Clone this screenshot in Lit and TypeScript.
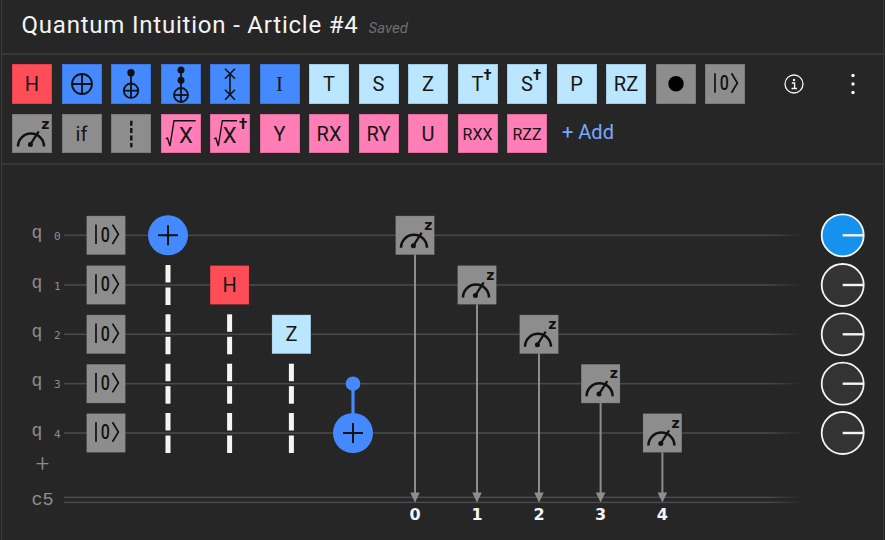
import { LitElement, html, css, svg } from "lit";
import { customElement } from "lit/decorators.js";

const WY = [235.3, 285, 334.3, 383.7, 433];
const MX = [415, 477, 539, 600.6, 662.4];

const meterGlyph = svg`
  <path d="M6 32.5 A13 13 0 0 1 32 32.5" fill="none" stroke="#111" stroke-width="2.5"/>
  <path d="M18.4 30.4 L26.7 17.4" stroke="#111" stroke-width="2.2"/>
  <circle cx="18.4" cy="30.4" r="2.5" fill="#111"/>
  <text x="33.3" y="14.6" class="mz">z</text>`;

const ketGlyph = svg`
  <path d="M10 9.3 V28.7" stroke="#111" stroke-width="1.7"/>
  <text transform="translate(19.3 26.4) scale(.8 1)" class="ket0">0</text>
  <path d="M26.5 9.3 L32.4 19 L26.5 28.7" fill="none" stroke="#111" stroke-width="1.7"/>`;

@customElement("app-root")
export class AppRoot extends LitElement {
  static styles = css`
    :host { display: block; width: 885px; height: 540px; background: #262626; box-sizing: border-box; padding: 0 1px;
      overflow: hidden; font-family: Roboto, "Open Sans", sans-serif; color: #f4f4f4; }
    .frame { height: 540px; box-sizing: border-box; border-left: 1px solid #383838; border-right: 1px solid #383838; }
    .head { height: 55px; box-sizing: border-box; display: flex; align-items: center; padding: 0 0 3px 19.5px; gap: 10px;
      border-bottom: 2px solid #363636; }
    .title { font-size: 24px; letter-spacing: .79px; }
    .saved { font-size: 15px; font-style: italic; color: #6f6f6f; margin-top: 5px; }
    .tools { height: 110px; box-sizing: border-box; border-bottom: 2px solid #363636; padding: 9px 10px 0; display: flex; flex-direction: column; gap: 10px; }
    .row { display: flex; gap: 9.5px; align-items: center; height: 40px; }
    .row.low { height: 39px; }
    .g { width: 40px; height: 100%; box-sizing: border-box; flex: none; display: flex; align-items: center; justify-content: center;
      color: #161616; font-size: 20px; box-shadow: inset 0 0 0 1px rgba(0,0,0,.12); position: relative; }
    .g svg { width: 40px; height: 40px; display: block; flex: none; }
    .small { font-size: 16px; padding-top: 2px; }
    .serif { font-family: "Liberation Serif", serif; font-size: 21px; }
    .red { background: #ff4d58; }
    .blue { background: #4589ff; }
    .sky { background: #bae6ff; }
    .pink { background: #ff7eb6; }
    .grey { background: #8d8d8d; }
    .dag { font-weight: 700; font-size: 15px; position: absolute; top: 2px; right: 6px; }
    .add { color: #78a9ff; font-size: 20px; margin: -3px 0 0 5.5px; }
    .spacer { width: 19.5px; flex: none; }
    .ico { width: 20px; height: 20px; flex: none; display: block; }
    .dots { margin-left: 29.5px; }
    .canvas { position: relative; height: 375px; }
    .canvas > svg { position: absolute; left: -2px; top: -165px; width: 885px; height: 540px; }
    text { font-family: Roboto, sans-serif; }
    .ql { font-family: "Liberation Mono", monospace; font-size: 18px; fill: #8d8d8d; }
    .qs { font-family: "DejaVu Sans Mono", monospace; font-size: 11px; fill: #8d8d8d; }
    .cl { font-family: "Liberation Mono", monospace; font-size: 18.5px; fill: #8d8d8d; }
    .gt { font-size: 20px; fill: #161616; text-anchor: middle; }
    .rad { font-size: 22px; fill: #161616; text-anchor: middle; }
    .rdag { font-size: 15px; font-weight: 700; fill: #111; text-anchor: middle; }
    .mz { font-family: "DejaVu Sans", sans-serif; font-weight: 700; font-size: 14px; fill: #111; text-anchor: middle; }
    .ket0 { font-weight: 500; font-size: 20px; fill: #111; text-anchor: middle; }
    .num { font-family: "DejaVu Sans", sans-serif; font-weight: 700; font-size: 16px; fill: #f4f4f4; text-anchor: middle; }
    .plus { font-size: 24px; font-weight: 300; fill: #8d8d8d; text-anchor: middle; }
  `;

  private box(x: number, y: number, fill: string, inner: unknown) {
    return svg`<g transform="translate(${x} ${y})">
      <rect x=".5" y=".5" width="39" height="39" fill=${fill} stroke="rgba(0,0,0,.14)"/>${inner}</g>`;
  }

  private barrier(x: number, from: number) {
    return WY.slice(from).map((y) => svg`
      <rect x=${x - 2.5} y=${y - 20} width="5" height="17.5" fill="#f4f4f4"/>
      <rect x=${x - 2.5} y=${y + 2.5} width="5" height="17.5" fill="#f4f4f4"/>`);
  }

  private circuit() {
    return svg`
      <defs>
        <linearGradient id="fade" x1="0" x2="1" y1="0" y2="0">
          <stop offset=".95" stop-color="#4a4a4a"/><stop offset="1" stop-color="#4a4a4a" stop-opacity="0"/>
        </linearGradient>
      </defs>
      ${WY.map((y, i) => svg`
        <text x="31.5" y=${y + 2.5} class="ql">q</text>
        <text x="54" y=${y + 4.7} class="qs">${i}</text>
        <rect x="64" y=${y - 0.75} width="740" height="1.5" fill="url(#fade)"/>`)}
      <text x="42.5" y="472.3" class="plus">+</text>
      <text x="31.5" y="505" class="cl">c5</text>
      <rect x="64" y="496.6" width="740" height="1.5" fill="url(#fade)"/>
      <rect x="64" y="501.6" width="740" height="1.5" fill="url(#fade)"/>
      ${WY.map((y) => this.box(86, y - 20, "#8d8d8d", ketGlyph))}

      <circle cx="168" cy=${WY[0]} r="20" fill="#4589ff"/>
      <path d=${`M158 ${WY[0]} H178 M168 ${WY[0] - 10} V${WY[0] + 10}`} stroke="#111" stroke-width="2"/>
      ${this.barrier(168, 1)}

      ${this.box(209.6, WY[1] - 20, "#ff4d58", svg`<text x="20" y="27" class="gt">H</text>`)}
      ${this.barrier(229.6, 2)}

      ${this.box(271.4, WY[2] - 20, "#bae6ff", svg`<text x="20" y="27" class="gt">Z</text>`)}
      ${this.barrier(291.4, 3)}

      <path d=${`M353 ${WY[3]} V${WY[4]}`} stroke="#4589ff" stroke-width="3.2"/>
      <circle cx="353" cy=${WY[3]} r="7.3" fill="#4589ff"/>
      <circle cx="353" cy=${WY[4]} r="20" fill="#4589ff"/>
      <path d=${`M343 ${WY[4]} H363 M353 ${WY[4] - 10} V${WY[4] + 10}`} stroke="#111" stroke-width="2"/>

      ${MX.map((x, i) => svg`
        <path d=${`M${x} ${WY[i]} V494`} stroke="#8d8d8d" stroke-width="2"/>
        <path d=${`M${x - 4.8} 492.6 H${x + 4.8} L${x} 502.6 Z`} fill="#8d8d8d"/>
        ${this.box(x - 20, WY[i] - 20, "#8d8d8d", meterGlyph)}
        <text x=${x} y="520" class="num">${i}</text>`)}

      ${WY.map((y, i) => svg`
        <circle cx="842.7" cy=${y} r="21" fill=${i === 0 ? "#1592ee" : "#333333"} stroke="#f4f4f4" stroke-width="1.8"/>
        <path d=${`M842.7 ${y} H863.7`} stroke="#f4f4f4" stroke-width="2.4"/>`)}
    `;
  }

  render() {
    const dag = html`<span class="dag">†</span>`;
    return html`
      <div class="frame">
      <div class="head"><span class="title">Quantum Intuition - Article #4</span><span class="saved">Saved</span></div>
      <div class="tools">
        <div class="row">
          <div class="g red">H</div>
          <div class="g blue"><svg viewBox="0 0 40 40"><circle cx="20" cy="20" r="10" fill="none" stroke="#111" stroke-width="1.8"/><path d="M10 20H30M20 10V30" stroke="#111" stroke-width="1.8"/></svg></div>
          <div class="g blue"><svg viewBox="0 0 40 40"><circle cx="20" cy="8.7" r="3.7" fill="#111"/><path d="M20 8.7V34" stroke="#111" stroke-width="1.8"/><circle cx="20" cy="26.7" r="7.2" fill="none" stroke="#111" stroke-width="1.8"/><path d="M12.8 26.7H27.2" stroke="#111" stroke-width="1.8"/></svg></div>
          <div class="g blue"><svg viewBox="0 0 40 40"><circle cx="20" cy="6" r="3.5" fill="#111"/><circle cx="20" cy="16.3" r="3.5" fill="#111"/><path d="M20 6V38" stroke="#111" stroke-width="1.8"/><circle cx="20" cy="31" r="7" fill="none" stroke="#111" stroke-width="1.8"/><path d="M13 31H27" stroke="#111" stroke-width="1.8"/></svg></div>
          <div class="g blue"><svg viewBox="0 0 40 40"><path d="M15 4.7L25 14.7M25 4.7L15 14.7M15 25.7L25 35.7M25 25.7L15 35.7M20 9.7V30.7" stroke="#111" stroke-width="1.6" fill="none"/></svg></div>
          <div class="g blue serif">I</div>
          <div class="g sky">T</div>
          <div class="g sky">S</div>
          <div class="g sky">Z</div>
          <div class="g sky">T${dag}</div>
          <div class="g sky">S${dag}</div>
          <div class="g sky">P</div>
          <div class="g sky">RZ</div>
          <div class="g grey"><svg viewBox="0 0 40 40"><circle cx="20" cy="19.7" r="7.7" fill="#000"/></svg></div>
          <div class="g grey"><svg viewBox="0 0 40 40">${ketGlyph}</svg></div>
          <div class="spacer"></div>
          <svg class="ico" viewBox="0 0 20 20"><circle cx="10" cy="10" r="9" fill="none" stroke="#f4f4f4" stroke-width="1.3"/><circle cx="10" cy="6" r="1.2" fill="#f4f4f4"/><path d="M7.8 9H10.6V14.5M7.5 14.5H13" fill="none" stroke="#f4f4f4" stroke-width="1.4"/></svg>
          <svg class="ico dots" viewBox="0 0 20 20"><circle cx="10" cy="1.5" r="1.7" fill="#f4f4f4"/><circle cx="10" cy="10" r="1.7" fill="#f4f4f4"/><circle cx="10" cy="18.5" r="1.7" fill="#f4f4f4"/></svg>
        </div>
        <div class="row low">
          <div class="g grey"><svg viewBox="0 0 40 40">${meterGlyph}</svg></div>
          <div class="g grey">if</div>
          <div class="g grey"><svg viewBox="0 0 40 40"><path d="M20.3 6.7V33.3" stroke="#111" stroke-width="2.4" stroke-dasharray="5 2.4"/></svg></div>
          <div class="g pink"><svg viewBox="0 0 40 40"><path d="M4.7 25L6.5 24L9 32L13 6.7H34.7" fill="none" stroke="#111" stroke-width="1.4"/><text x="25" y="28.7" class="rad">X</text></svg></div>
          <div class="g pink"><svg viewBox="0 0 40 40"><path d="M4 25L5.8 24L8.3 32L12.3 6.7H27" fill="none" stroke="#111" stroke-width="1.4"/><text x="19.7" y="28.7" class="rad">X</text><text x="33" y="15" class="rdag">†</text></svg></div>
          <div class="g pink">Y</div>
          <div class="g pink">RX</div>
          <div class="g pink">RY</div>
          <div class="g pink">U</div>
          <div class="g pink small">RXX</div>
          <div class="g pink small">RZZ</div>
          <span class="add">+ Add</span>
        </div>
      </div>
      <div class="canvas"><svg viewBox="0 0 885 540">${this.circuit()}</svg></div>
      </div>`;
  }
}
